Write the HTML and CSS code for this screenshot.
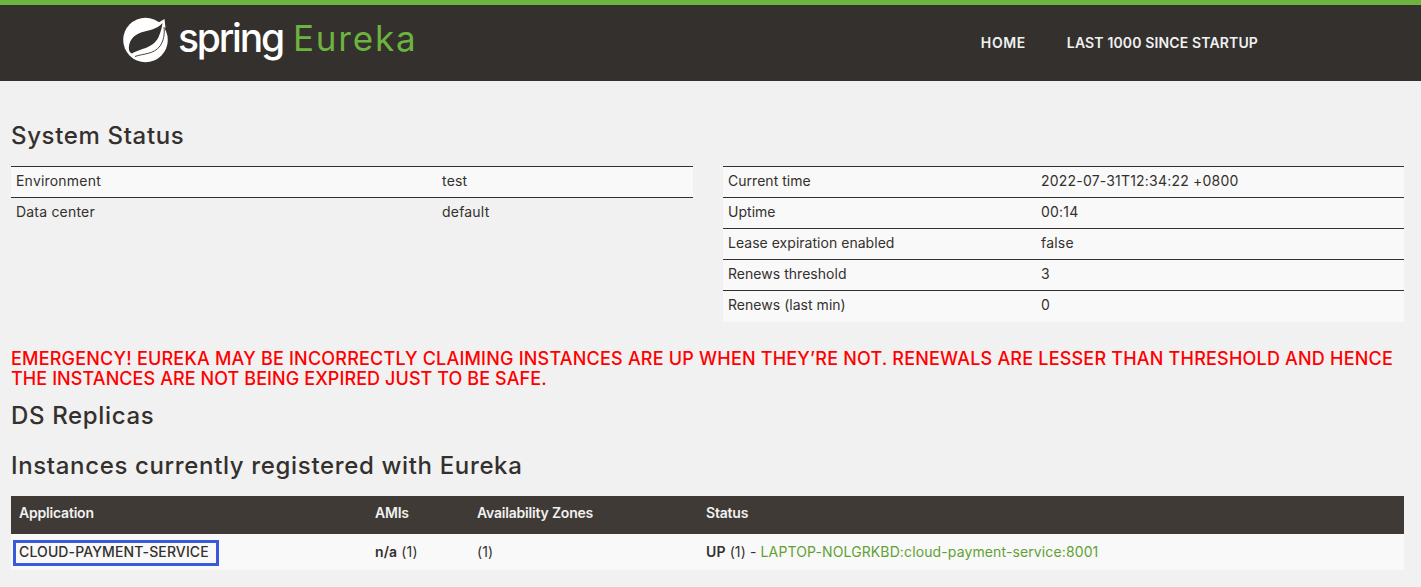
FILE: index.html
```html
<!DOCTYPE html>
<html lang="en">
<head>
<meta charset="utf-8">
<title>Eureka</title>
<link rel="stylesheet" href="styles.css">
</head>
<body>
<nav class="navbar">
  <div class="brand">
    <svg class="leaf" viewBox="0 0 46 46" width="46" height="46" aria-hidden="true">
      <circle cx="22.500" cy="23" r="22.300" fill="#fff"/>
      <path fill="#34302d" d="M46 0H35V4.500L41 2.500 42 10 46 12Z"/>
      <path fill="#fff" d="M33 7 41.500 2 42.500 11 38 12Z"/>
      <path fill="#34302d" d="M39.500 6C34 12.500 25 13.500 18 15.500 10 18 5 25 6 33 6.500 35 7.500 36 9 36.500 18 31 31 31.500 36 19 38 14 39 10 39.500 6Z"/>
      <path fill="none" stroke="#34302d" stroke-width="0.900" d="M12 39.500C20 36.500 31 37.500 37 29 40.500 24 42 17 41 10"/>
    </svg>
    <span class="word-spring">spring</span>
    <span class="word-eureka">Eureka</span>
  </div>
  <ul class="nav-links">
    <li class="nav-home">HOME</li>
    <li>LAST 1000 SINCE STARTUP</li>
  </ul>
</nav>
<main class="content">
  <h1 class="heading heading-first">System Status</h1>
  <div class="status-grid">
    <table class="info-table info-left">
      <tbody>
        <tr class="odd"><td class="k-left">Environment</td><td>test</td></tr>
        <tr><td>Data center</td><td>default</td></tr>
      </tbody>
    </table>
    <table class="info-table info-right">
      <tbody>
        <tr class="odd"><td class="k-right key">Current time</td><td>2022-07-31T12:34:22 +0800</td></tr>
        <tr class="odd"><td class="key">Uptime</td><td>00:14</td></tr>
        <tr class="odd"><td class="key">Lease expiration enabled</td><td>false</td></tr>
        <tr class="odd"><td class="key">Renews threshold</td><td>3</td></tr>
        <tr class="odd"><td class="key">Renews (last min)</td><td>0</td></tr>
      </tbody>
    </table>
  </div>
  <h4 class="emergency">EMERGENCY! EUREKA MAY BE INCORRECTLY CLAIMING INSTANCES ARE UP WHEN THEY’RE NOT. RENEWALS ARE LESSER THAN THRESHOLD AND HENCE <span class="emergency-tail">THE INSTANCES ARE NOT BEING EXPIRED JUST TO BE SAFE.</span></h4>
  <h1 class="heading heading-ds">DS Replicas</h1>
  <h1 class="heading heading-inst">Instances currently registered with Eureka</h1>
  <table class="instances">
    <thead>
      <tr><th class="c-app">Application</th><th class="c-ami">AMIs</th><th class="c-zone">Availability Zones</th><th>Status</th></tr>
    </thead>
    <tbody>
      <tr>
        <td class="cell-app"><span class="app-box">CLOUD-PAYMENT-SERVICE</span></td>
        <td><b class="strong">n/a</b> (1)</td>
        <td>(1)</td>
        <td><b class="strong">UP</b> (1) - <a class="inst-link" href="#">LAPTOP-NOLGRKBD:cloud-payment-service:8001</a></td>
      </tr>
    </tbody>
  </table>
</main>
</body>
</html>
```
FILE: styles.css
```css
* { box-sizing: border-box; }
html, body { margin: 0; padding: 0; }
body {
  background: #f1f1f1;
  color: #34302d;
  font-family: "Inter", "Liberation Sans", sans-serif;
  font-size: 14px;
  overflow: hidden;
}
.navbar {
  height: 81px;
  background: #34302d;
  border-top: 5px solid #6db33f;
  display: flex;
  justify-content: space-between;
  padding: 0 163px 0 123px;
}
.brand { display: flex; align-items: flex-start; padding-top: 12px; }
.leaf { display: block; }
.word-spring {
  color: #fff;
  font-family: "Inter", sans-serif;
  font-size: 39px;
  font-weight: 500;
  line-height: 42px;
  letter-spacing: -2.2px;
  margin-left: 9px;
}
.word-eureka {
  color: #6db33f;
  font-family: "Inter", sans-serif;
  font-size: 35px;
  line-height: 42px;
  letter-spacing: 1.8px;
  margin-left: 10px;
}
.nav-links {
  list-style: none;
  margin: 0;
  padding: 30px 0 0;
  display: flex;
  gap: 41px;
  color: #f1f1f1;
  font-size: 14px;
  font-weight: 600;
  letter-spacing: 0.14px;
  line-height: 16px;
}
.nav-links .nav-home { letter-spacing: 0.6px; }
.content { padding: 0 17px 0 11px; }
.heading {
  margin: 0;
  font-size: 24px;
  font-weight: 500;
  letter-spacing: 0.65px;
  line-height: 30px;
}
.heading-first { padding-top: 40px; }
.status-grid {
  display: grid;
  grid-template-columns: 682px 681px;
  column-gap: 30px;
  margin-top: 15px;
  align-items: start;
}
.info-table { border-collapse: collapse; width: 100%; table-layout: fixed; }
.info-table td {
  height: 31px;
  padding: 0 5px 3px;
  border-top: 1px solid #34302d;
  font-size: 14px;
  letter-spacing: 0.2px;
}
.info-table .odd td { background: #f9f9f9; }
.info-table td.key { letter-spacing: 0.03px; }
.k-left { width: 426px; }
.k-right { width: 313px; }
.emergency {
  margin: 27px 0 0;
  color: #f00;
  font-size: 18px;
  font-weight: 500;
  letter-spacing: 0.2px;
  line-height: 20px;
}
.emergency-tail { letter-spacing: 0.08px; }
.heading-ds { margin-top: 12px; }
.heading-inst { margin-top: 20px; }
.instances {
  margin-top: 15px;
  width: 100%;
  border-collapse: collapse;
  table-layout: fixed;
}
.instances th {
  height: 38px;
  padding: 0 8px 4px;
  background: #3f3a36;
  color: #f1f1f1;
  font-size: 14px;
  font-weight: 600;
  letter-spacing: -0.2px;
  text-align: left;
}
.instances td {
  height: 36px;
  padding: 0 8px 1px;
  background: #f9f9f9;
  font-size: 14px;
  letter-spacing: 0.12px;
}
.instances td.cell-app { padding: 2px 8px 0; }
.strong { font-weight: 600; }
.c-app { width: 356px; }
.c-ami { width: 102px; }
.c-zone { width: 229px; }
.app-box {
  display: block;
  width: 206px;
  height: 26px;
  margin-left: -6px;
  padding: 0 0 3px 3px;
  border: 3px solid #3a5bd9;
  line-height: 17px;
  font-weight: 500;
  white-space: nowrap;
}
.inst-link { color: #5fa134; text-decoration: none; }
```
